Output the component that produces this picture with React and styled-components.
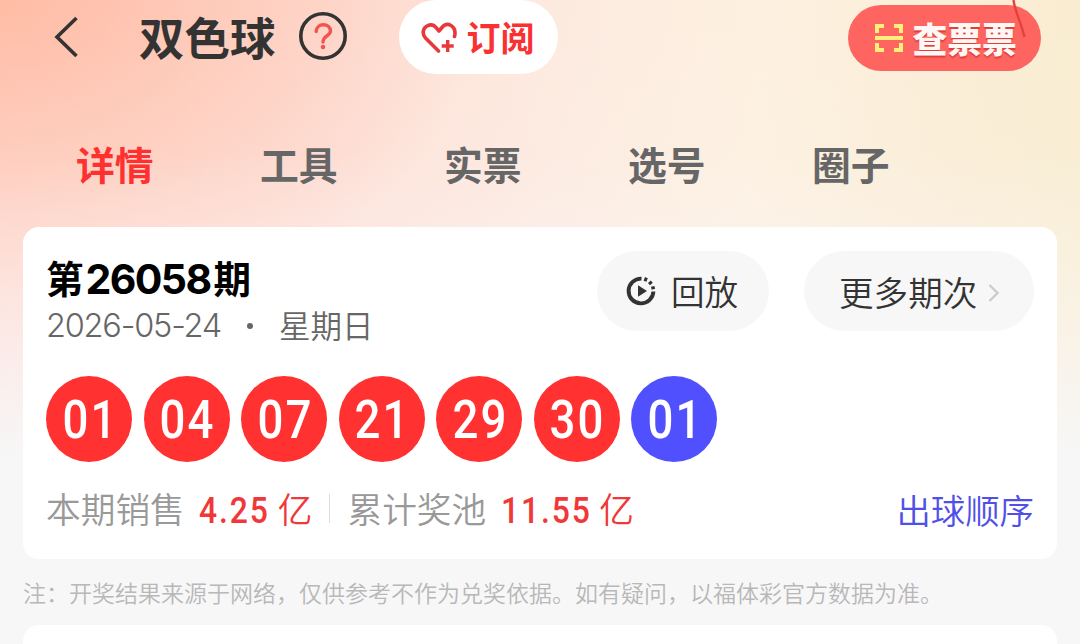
import React from 'react';
import styled, { createGlobalStyle } from 'styled-components';

const GlobalStyle = createGlobalStyle`
	* {
		box-sizing: border-box;
	}
	body {
		margin: 0;
		background: #f7f7f8;
		font-family: 'Noto Sans CJK SC', sans-serif;
	}
	button {
		border: none;
		padding: 0;
		background: none;
		font-family: inherit;
	}
	svg {
		display: block;
		flex: none;
	}
`;

const Page = styled.div`
	width: 1080px;
	height: 644px;
	overflow: hidden;
	background:
		linear-gradient(180deg, rgba(247, 247, 248, 0) 0, rgba(247, 247, 248, 0.08) 150px, rgba(250, 246, 248, 0.55) 330px, #f7f7f8 460px),
		radial-gradient(ellipse 480px 330px at 0 0, rgba(255, 176, 148, 0.7), rgba(255, 196, 178, 0) 100%),
		linear-gradient(95deg, #ffd8cd 0, #fee0d7 340px, #fdebe0 580px, #fdf0e0 760px, #faedd4 1000px, #f9edd0 1100px);
`;

const Header = styled.header`
	display: flex;
	align-items: flex-start;
	height: 74px;
	padding-left: 52px;
`;

const BackButton = styled.button`
	margin: 16px 59px 0 0;
`;

const Title = styled.h1`
	margin: 6px 23px 0 0;
	font-size: 45.5px;
	line-height: 60px;
	font-weight: 700;
	color: #333;
`;

const HelpButton = styled.button`
	width: 48px;
	height: 48px;
	margin: 12px 52px 0 0;
`;

const SubscribeButton = styled.button`
	display: flex;
	align-items: center;
	width: 159px;
	height: 74px;
	padding-left: 21px;
	gap: 9px;
	border-radius: 37px;
	background: #fff;
	color: #fb3030;
	font-size: 34px;
	line-height: 74px;
	font-weight: 700;
`;

const CheckTicketButton = styled.button`
	position: relative;
	display: flex;
	align-items: center;
	width: 193px;
	height: 66px;
	margin: 5px 0 0 290px;
	padding-left: 26px;
	gap: 9px;
	border-radius: 33px;
	background: #ff6560;
	color: #fff7f4;
	font-size: 34.8px;
	line-height: 62px;
	font-weight: 900;
	text-shadow: 0 2px 1px #e23c3c;
`;

const Ribbon = styled.svg`
	position: absolute;
	top: -5px;
	right: 12px;
`;

const Tabs = styled.nav`
	display: flex;
	gap: 106px;
	height: 153px;
	padding: 59px 0 0 76px;
`;

const Tab = styled.a`
	width: 78px;
	font-size: 38.8px;
	line-height: 60px;
	font-weight: 700;
	white-space: nowrap;
	color: ${(props) => (props.$active ? '#ff3030' : '#666')};
`;

const Card = styled.section`
	height: 332px;
	margin: 0 23px;
	padding: 23px 23px 0;
	border-radius: 16px;
	background: #fff;
`;

const CardTop = styled.div`
	display: flex;
	align-items: flex-start;
	height: 126px;
`;

const Period = styled.div`
	width: 551px;
`;

const PeriodName = styled.h2`
	display: flex;
	height: 48px;
	margin: 4px 0 0;
	font-size: 37.5px;
	line-height: 46px;
	font-weight: 700;
	color: #000;
`;

const PeriodNumber = styled.span`
	margin: 2px 3px 0 2px;
	font-family: Inter, sans-serif;
	font-size: 41px;
	letter-spacing: -1.6px;
`;

const PeriodDate = styled.div`
	display: flex;
	align-items: center;
	height: 44px;
	color: #666;
	font-size: 31.5px;
	line-height: 44px;
	font-weight: 350;
	white-space: nowrap;
`;

const DateText = styled.span`
	width: 176px;
	margin-top: 3px;
	font-family: Inter, sans-serif;
	font-size: 32.5px;
	letter-spacing: -1.2px;
`;

const Dot = styled.span`
	width: 6px;
	height: 6px;
	margin: 4px 26px 0 25px;
	border-radius: 50%;
	background: #666;
`;

const PillButton = styled.button`
	display: flex;
	align-items: center;
	width: ${(props) => props.$width}px;
	height: 80px;
	margin-top: 1px;
	padding-left: ${(props) => props.$inset}px;
	border-radius: 40px;
	background: #f7f7f7;
	color: #333;
	font-size: ${(props) => props.$size}px;
	line-height: 80px;
	font-weight: 350;
	gap: ${(props) => props.$gap}px;

	& + & {
		margin-left: 35px;
	}
`;

const Balls = styled.div`
	display: flex;
	gap: 11.5px;
`;

const Ball = styled.span`
	display: flex;
	justify-content: center;
	width: 86px;
	height: 86px;
	padding-left: 3px;
	border-radius: 50%;
	background: ${(props) => (props.$blue ? '#5050ff' : '#ff3131')};
	color: #fff;
`;

const BallNumber = styled.span`
	font-family: Roboto, sans-serif;
	font-size: 53px;
	line-height: 89px;
	font-weight: 500;
	letter-spacing: 2.5px;
	transform: scaleX(0.86);
`;

const Summary = styled.div`
	display: flex;
	align-items: center;
	height: 60px;
	margin-top: 16px;
	font-size: 34.7px;
	line-height: 60px;
	font-weight: 350;
	color: #999;
	white-space: nowrap;
`;

const Amount = styled.span`
	display: flex;
	margin-left: ${(props) => props.$space}px;
	color: #f03838;
`;

const Figure = styled.span`
	width: ${(props) => props.$width}px;
	height: 60px;
	font-family: Roboto, sans-serif;
	font-size: 37px;
	line-height: 65px;
	font-weight: 500;
	letter-spacing: 2.2px;
	transform: scaleX(0.86);
	transform-origin: left;
`;

const Divider = styled.span`
	width: 1px;
	height: 29px;
	margin: 0 17px;
	background: #ddd;
`;

const OrderLink = styled.a`
	margin: 2px 0 0 auto;
	color: #5050e8;
	font-size: 34.4px;
`;

const Note = styled.p`
	height: 66px;
	margin: 0;
	padding-left: 23px;
	font-size: 23px;
	line-height: 66px;
	font-weight: 350;
	color: #b8b8b8;
	white-space: nowrap;
`;

const NextCard = styled.section`
	height: 40px;
	margin: 0 23px;
	border-radius: 16px 16px 0 0;
	background: #fff;
`;

const BackIcon = () => (
	<svg width="28" height="42" viewBox="0 0 28 42" fill="none" stroke="#333" strokeWidth="3.6">
		<path d="M24.5 2 5 21l19.500 19" />
	</svg>
);

const HelpIcon = () => (
	<svg width="48" height="48" viewBox="0 0 48 48" fill="none">
		<circle cx="24" cy="24" r="22.200" stroke="#333" strokeWidth="3.600" />
		<path d="M17.200 19.500C17.200 10.500 31.500 10.500 31.500 19C31.500 23.500 24 24 24 30" stroke="#f4544f" strokeWidth="3.400" strokeLinecap="round" />
		<circle cx="24" cy="35" r="2.300" fill="#f4544f" />
	</svg>
);

const HeartPlusIcon = () => (
	<svg width="38" height="34" viewBox="0 0 38 34" fill="none" stroke="#e8383c" strokeWidth="3.600" strokeLinecap="round">
		<path d="M18.500 31 5.500 18C2 14 2.500 8.500 7 6C11 3.800 14 5 16 7.500L19 11l3-3.500C24.500 4.500 28 3.800 31 5.500C35 8 35.500 12.500 34.500 16.500" strokeLinejoin="round" />
		<path d="M27.700 20v12M21.700 26h12" strokeLinecap="butt" strokeWidth="3.400" />
	</svg>
);

const ScanIcon = () => (
	<svg width="30" height="30" viewBox="0 0 30 30" fill="none" stroke="#fdf07a" strokeWidth="4">
		<path d="M3 10V3h7M20 3h7v7M3 20v7h7M20 27h7v-7M1 15h28" />
	</svg>
);

const ReplayIcon = () => (
	<svg width="32" height="32" viewBox="0 0 32 32" fill="none" stroke="#333" strokeWidth="3.900">
		<path d="M16.500 3.600A12.400 12.400 0 1 0 28.400 16.500" />
		<path d="M20 6.300 21.400 2.600M24 9.100 26.800 6.600M26.300 13.300 29.800 12.400" strokeWidth="3" />
		<path d="M13 10.300v11.400l9-5.700z" fill="#333" stroke="none" />
	</svg>
);

const ChevronIcon = () => (
	<svg width="12" height="22" viewBox="0 0 12 22" fill="none" stroke="#ccc" strokeWidth="2.400">
		<path d="M1.500 5 9.500 13l-8 8" />
	</svg>
);

const tabs = ['详情', '工具', '实票', '选号', '圈子'];
const redBalls = ['01', '04', '07', '21', '29', '30'];

export default function App() {
	return (
		<Page>
			<GlobalStyle />
			<Header>
				<BackButton>
					<BackIcon />
				</BackButton>
				<Title>双色球</Title>
				<HelpButton>
					<HelpIcon />
				</HelpButton>
				<SubscribeButton>
					<HeartPlusIcon />
					订阅
				</SubscribeButton>
				<CheckTicketButton>
					<ScanIcon />
					查票票
					<Ribbon width="18" height="40" viewBox="0 0 18 40" fill="none" stroke="#e6403f" strokeWidth="2.400">
						<path d="M2.500 0C4 12 10 22 13.500 37" />
					</Ribbon>
				</CheckTicketButton>
			</Header>
			<Tabs>
				{tabs.map((name, i) => (
					<Tab key={name} $active={i === 0}>
						{name}
					</Tab>
				))}
			</Tabs>
			<Card>
				<CardTop>
					<Period>
						<PeriodName>
							第<PeriodNumber>26058</PeriodNumber>期
						</PeriodName>
						<PeriodDate>
							<DateText>2026-05-24</DateText>
							<Dot />
							星期日
						</PeriodDate>
					</Period>
					<PillButton $width={172} $inset={28} $size={33.6} $gap={14}>
						<ReplayIcon />
						回放
					</PillButton>
					<PillButton $width={230} $inset={35} $size={34.6} $gap={11}>
						更多期次
						<ChevronIcon />
					</PillButton>
				</CardTop>
				<Balls>
					{redBalls.map((number) => (
						<Ball key={number}>
							<BallNumber>{number}</BallNumber>
						</Ball>
					))}
					<Ball $blue>
						<BallNumber>01</BallNumber>
					</Ball>
				</Balls>
				<Summary>
					本期销售
					<Amount $space={14}>
						<Figure $width={79}>4.25</Figure>亿
					</Amount>
					<Divider />
					累计奖池
					<Amount $space={15}>
						<Figure $width={98}>11.55</Figure>亿
					</Amount>
					<OrderLink>出球顺序</OrderLink>
				</Summary>
			</Card>
			<Note>注：开奖结果来源于网络，仅供参考不作为兑奖依据。如有疑问，以福体彩官方数据为准。</Note>
			<NextCard />
		</Page>
	);
}
